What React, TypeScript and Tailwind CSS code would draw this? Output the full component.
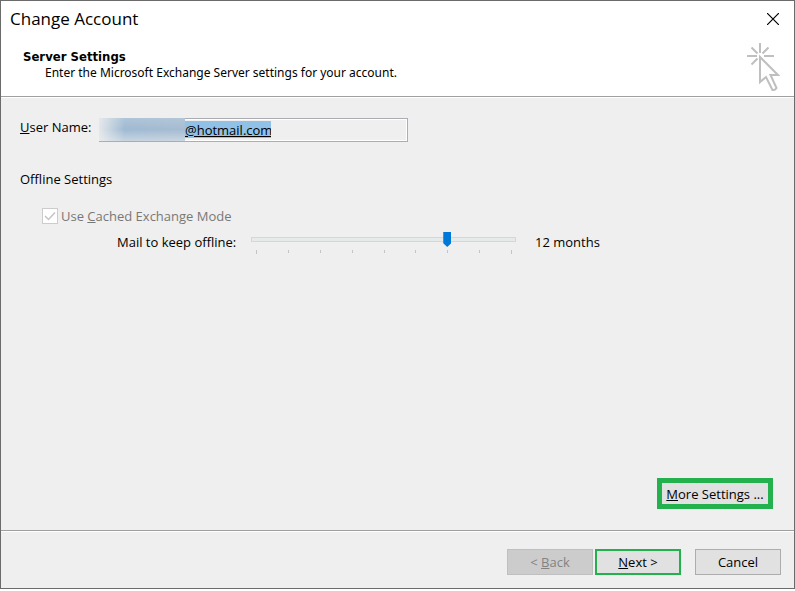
import React, { useState } from "react";

const TICKS = [0, 1, 2, 3, 4, 5, 6, 7, 8];

const MAIL_RANGES = [
  "3 days",
  "1 week",
  "2 weeks",
  "1 month",
  "3 months",
  "6 months",
  "12 months",
  "24 months",
  "All",
];

function ClickIcon() {
  return (
    <svg
      className="w-[34px] h-[50px]"
      viewBox="0 0 34 50"
      fill="none"
      stroke="#bfbfbf"
      strokeWidth={2}
      aria-hidden="true"
    >
      <path d="M13 0v10M0 13h10M17 13h10M4.500 4.500l6 6M21.500 4.500l-6 6M4.500 21.500l6-6" />
      <path d="M13 14v25l6-5 6.500 13q2.500 .500 4-2L23.500 32H31z" />
    </svg>
  );
}

function Header() {
  return (
    <header className="bg-white border-b border-[#a0a0a0]">
      <div className="flex items-center justify-between h-9 pl-[9px] pr-[14px]">
        <h1 className="text-[17px] leading-6">Change Account</h1>
        <button type="button" aria-label="Close" className="p-px">
          <svg
            className="w-3 h-3"
            viewBox="0 0 12 12"
            fill="none"
            stroke="#000"
            strokeWidth={1.2}
          >
            <path d="M0 0l12 12M12 0L0 12" />
          </svg>
        </button>
      </div>
      <div className="flex justify-between h-[59px] pl-[22px] pr-[13px] pt-[6px]">
        <div className="pt-[6px]">
          <h2 className="font-['DejaVu_Sans_Condensed','DejaVu_Sans',sans-serif] text-[13px] leading-4 font-bold">
            Server Settings
          </h2>
          <p className="pl-[22px] font-['Noto_Sans',sans-serif] text-[12px] leading-4">
            Enter the Microsoft Exchange Server settings for your account.
          </p>
        </div>
        <ClickIcon />
      </div>
    </header>
  );
}

function OfflineSettings() {
  const [range, setRange] = useState(6);

  return (
    <section className="mt-7">
      <h2>Offline Settings</h2>
      <label className="flex items-center gap-[3px] mt-[19px] ml-[22px] text-[#787878]">
        <span className="grid w-4 h-4">
          <input
            type="checkbox"
            defaultChecked
            disabled
            className="appearance-none col-start-1 row-start-1 w-4 h-4 border border-[#cccccc] bg-white"
          />
          <svg
            className="col-start-1 row-start-1 w-4 h-4"
            viewBox="0 0 16 16"
            fill="none"
            stroke="#c4c4c4"
            strokeWidth={1.5}
          >
            <path d="M3 8l3.500 3.500L13 4.500" />
          </svg>
        </span>
        <span>
          Use <u>C</u>ached Exchange Mode
        </span>
      </label>

      <div className="flex items-start mt-[7px] ml-[97px] leading-5">
        <label htmlFor="mail-range" className="w-[134px] shrink-0">
          Mail to keep offline:
        </label>
        <div className="w-[265px]">
          <input
            id="mail-range"
            type="range"
            min={0}
            max={8}
            value={range}
            onChange={(e: React.ChangeEvent<HTMLInputElement>) =>
              setRange(Number(e.target.value))
            }
            className="block w-full h-[15px] appearance-none bg-transparent [&::-webkit-slider-runnable-track]:h-[5px] [&::-webkit-slider-runnable-track]:border [&::-webkit-slider-runnable-track]:border-[#d6d6d6] [&::-webkit-slider-runnable-track]:bg-[#e7eaea] [&::-webkit-slider-thumb]:appearance-none [&::-webkit-slider-thumb]:w-2 [&::-webkit-slider-thumb]:h-[15px] [&::-webkit-slider-thumb]:-mt-[6px] [&::-webkit-slider-thumb]:bg-[#0078d7] [&::-webkit-slider-thumb]:[clip-path:polygon(0_0,100%_0,100%_75%,50%_100%,0_75%)]"
          />
          <div className="flex justify-between pl-[5px] pr-1 mt-[3px]">
            {TICKS.map((tick) => (
              <span
                key={tick}
                className="w-px h-[3px] bg-[#c4c4c4] first:h-1 last:h-1"
              />
            ))}
          </div>
        </div>
        <output htmlFor="mail-range" className="ml-[19px]">
          {MAIL_RANGES[range]}
        </output>
      </div>
    </section>
  );
}

export default function App() {
  return (
    <div className="min-h-screen flex flex-col pb-[2px] bg-white font-['Open_Sans','Noto_Sans',sans-serif] text-[13px] leading-[18px] text-black">
      <div className="flex flex-col flex-1 border border-[#6b6b6b] bg-[#efefef]">
        <Header />

        <main className="flex flex-col flex-1 border-t border-white pl-[19px] pr-[21px] pt-5">
          <div className="flex items-start">
            <label htmlFor="user-name" className="w-[79px] shrink-0">
              <u>U</u>ser Name:
            </label>
            <div className="flex w-[309px] h-6 border border-[#abadb3]">
              {/* Redacted account name */}
              <span className="flex w-[86px] -mt-px -ml-px bg-linear-to-r from-[#e3e7ea] via-[#9fbad3] via-30% to-[#a5bcd2]">
                <span className="flex-1 bg-linear-to-b from-[#efefef]/20 via-transparent to-[#efefef]/50" />
              </span>
              <div className="flex flex-1 border border-l-0 border-white">
                <input
                  id="user-name"
                  type="text"
                  readOnly
                  defaultValue="@hotmail.com"
                  className="w-[86px] h-[17px] mt-px bg-[#91c1e7] underline outline-none"
                />
              </div>
            </div>
          </div>

          <OfflineSettings />

          <button
            type="button"
            className="mt-auto mb-[21px] self-end w-[116px] h-[31px] border-[5px] border-[#22b14c] bg-[#e1e1e1]"
          >
            <u>M</u>ore Settings ...
          </button>
        </main>

        <footer className="flex justify-end border-t border-[#a0a0a0]">
          <div className="flex justify-end flex-1 border-t border-white pt-[17px] pb-[13px] pr-[13px]">
            <button
              type="button"
              disabled
              className="w-[86px] h-[26px] mr-[2px] border border-[#bfbfbf] bg-[#cccccc] text-[#838383]"
            >
              &lt; <u>B</u>ack
            </button>
            <button
              type="button"
              className="w-[86px] h-[26px] mr-[14px] border-2 border-[#22b14c] bg-[#e1e1e1]"
            >
              <u>N</u>ext &gt;
            </button>
            <button
              type="button"
              className="w-[86px] h-[26px] border border-[#adadad] bg-[#e1e1e1]"
            >
              Cancel
            </button>
          </div>
        </footer>
      </div>
    </div>
  );
}
